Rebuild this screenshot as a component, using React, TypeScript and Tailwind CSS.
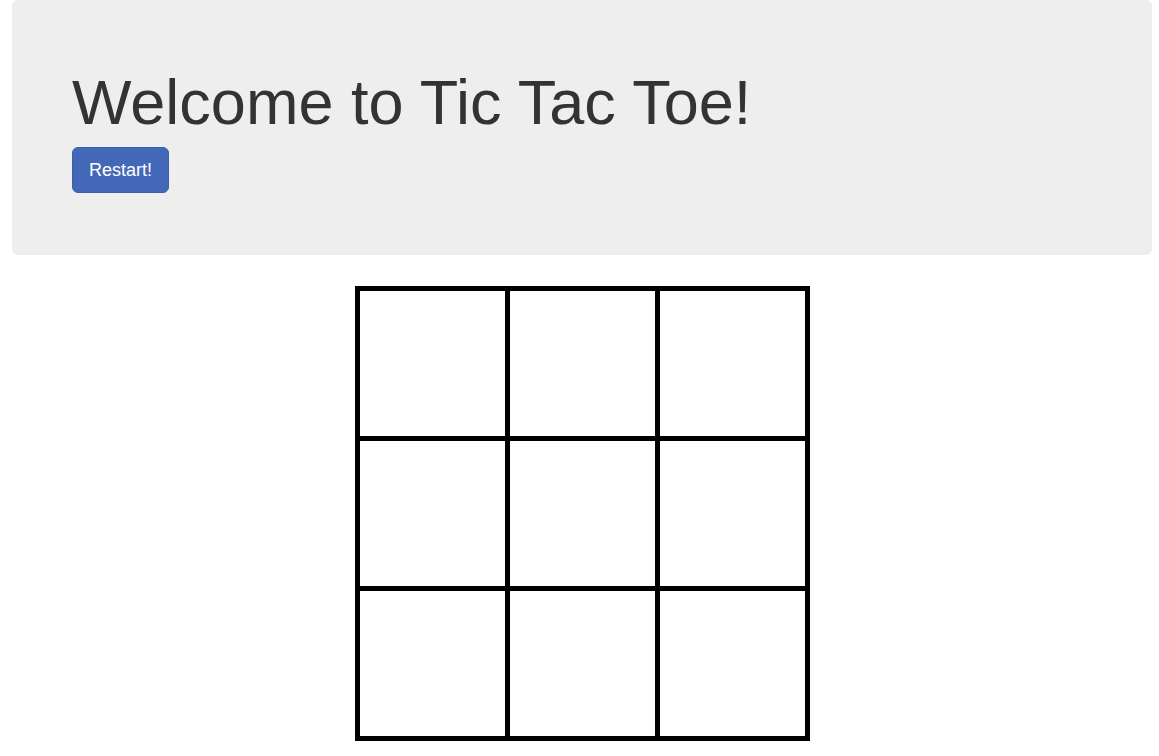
export default function App() {
  const cells = Array.from({ length: 9 });
  return (
    <div className="min-h-screen bg-white font-['Liberation_Sans',Arial,sans-serif] text-[#333]">
      <div className="ml-[12px] mr-[7px]">
        <div className="h-[255px] rounded-b-[6px] rounded-t-[6px] bg-[#eeeeee] px-[60px] pt-[68px]">
          <h1 className="text-[63px] leading-[1.1] font-normal">Welcome to Tic Tac Toe!</h1>
          <button className="mt-[10px] h-[46px] w-[97px] rounded-[6px] border border-[#3b5ea9] bg-[#4468b8] text-[18px] text-white">
            Restart!
          </button>
        </div>
        <div className="mt-[31px] flex justify-center">
          <div className="grid grid-cols-[145px_145px_145px] gap-[5px] bg-black p-[5px]">
            {cells.map((_, i) => (
              <div key={i} className="h-[145px] bg-white" />
            ))}
          </div>
        </div>
      </div>
    </div>
  );
}
